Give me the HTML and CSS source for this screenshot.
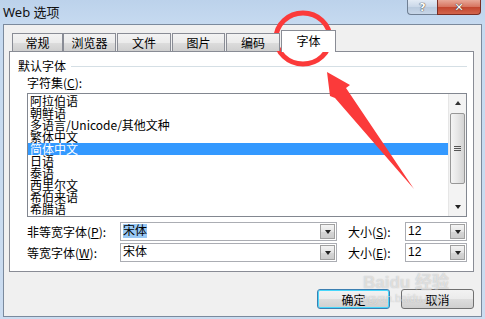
FILE: index.html
```html
<!DOCTYPE html>
<html>
<head>
  <meta charset="UTF-8">
  <title>Web 选项</title>
  <link rel="stylesheet" href="styles.css">
</head>
<body>
  <div class="titlebar">
    <span class="title">Web 选项</span>
    <div class="caption">
      <span class="cap-btn help">?</span>
      <span class="cap-btn close">✕</span>
    </div>
  </div>

  <div class="client">
    <!-- вкладки -->
    <div class="tabs">
      <div class="tab t1">常规</div>
      <div class="tab t2">浏览器</div>
      <div class="tab t3">文件</div>
      <div class="tab t4">图片</div>
      <div class="tab t5">编码</div>
      <div class="tab active">字体</div>
    </div>

    <div class="panel">
      <div class="group"><span>默认字体</span><i class="rule"></i></div>
      <div class="field-label">字符集(<u>C</u>):</div>

      <div class="listbox">
        <ul class="items">
          <li>阿拉伯语</li>
          <li>朝鲜语</li>
          <li>多语言/Unicode/其他文种</li>
          <li>繁体中文</li>
          <li class="selected">简体中文</li>
          <li>日语</li>
          <li>泰语</li>
          <li>西里尔文</li>
          <li>希伯来语</li>
          <li>希腊语</li>
        </ul>
        <div class="vscroll">
          <span class="sb-btn"><i class="tri up"></i></span>
          <span class="track"><span class="thumb"><i class="grip"></i></span></span>
          <span class="sb-btn"><i class="tri down"></i></span>
        </div>
      </div>

      <div class="font-row">
        <span class="row-label">非等宽字体(<u>P</u>):</span>
        <div class="combo wide"><span class="value"><span class="sel">宋体</span></span><span class="drop"><i class="tri down"></i></span></div>
        <span class="size-label">大小(<u>S</u>):</span>
        <div class="combo narrow"><span class="value">12</span><span class="drop"><i class="tri down"></i></span></div>
      </div>
      <div class="font-row second">
        <span class="row-label">等宽字体(<u>W</u>):</span>
        <div class="combo wide"><span class="value">宋体</span><span class="drop"><i class="tri down"></i></span></div>
        <span class="size-label">大小(<u>E</u>):</span>
        <div class="combo narrow"><span class="value">12</span><span class="drop"><i class="tri down"></i></span></div>
      </div>
    </div>

    <div class="actions">
      <button class="btn default">确定</button>
      <button class="btn">取消</button>
    </div>
  </div>

  <!-- пометки поверх скриншота -->
  <svg class="annot" width="485" height="319" viewBox="0 0 485 319">
    <ellipse cx="303" cy="38.5" rx="27" ry="25.5" fill="none" stroke="#fb3a3a" stroke-width="5"/>
    <polygon points="327,72 350,85 346,88 414,189 335,98 330,96" fill="#fb3a3a"/>
  </svg>

  <div class="watermark">
    <div class="wm-logo">Bai<span class="paw">du</span> 经验</div>
    <div class="wm-url">jingyan.baidu.com</div>
  </div>
</body>
</html>
```

FILE: styles.css
```css
body {
  margin: 0;
  width: 485px;
  height: 319px;
  overflow: hidden;
  position: relative;
  font-family: "SimSun", "Noto Sans CJK SC", sans-serif;
  font-size: 12px;
  color: #000;
  background: linear-gradient(to bottom, #bcd2eb 0, #c6daf0 24px, #cbdcf0 100%);
}

/* заголовок окна */
.titlebar { height: 24px; display: flex; align-items: flex-start; }
.title {
  padding: 4px 0 0 3px;
  font-family: "Segoe UI", "Noto Sans", "Noto Sans CJK SC", sans-serif;
  font-size: 13px;
  line-height: 16px;
  color: #111;
}
.caption { margin-left: auto; margin-right: 4px; display: flex; }
.cap-btn {
  height: 15px;
  box-sizing: border-box;
  border: 1px solid #6f7f93;
  border-top: none;
  display: flex; align-items: center; justify-content: center;
  font-family: "DejaVu Sans", sans-serif;
  font-weight: bold;
  color: #fff;
  text-shadow: 0 0 1px #333, 0 0 1px #333;
}
.help {
  width: 30px;
  border-radius: 0 0 0 4px;
  border-right: none;
  font-size: 11px;
  background: linear-gradient(to bottom, #e3ebf5, #c9d7e8 50%, #b9cade 51%, #c7d6e8);
}
.close {
  width: 44px;
  border-radius: 0 0 4px 0;
  border-color: #7a2e24;
  font-size: 11px;
  background: linear-gradient(to bottom, #e8a898, #d6735e 50%, #c2452e 51%, #d2654c);
}

/* клиентская область */
.client {
  margin: 0 3px 0 3px;
  height: 293px;
  box-sizing: border-box;
  border: 1px solid #7b8a9d;
  background: #f0f0f0;
  padding-top: 8px;
}

.tabs { display: flex; height: 18px; align-items: flex-end; margin-left: 8px; position: relative; z-index: 1; }
.tab {
  height: 18px;
  box-sizing: border-box;
  border: 1px solid #898c95;
  border-bottom: none;
  margin-right: 1px;
  text-align: center;
  line-height: 17px;
  background: linear-gradient(to bottom, #f3f3f3, #ebebeb 50%, #dddddd 51%, #cfcfcf);
}
.t1 { width: 51px; margin-right: 0; }
.t2 { width: 53px; }
.t3 { width: 54px; }
.t4 { width: 53px; }
.t5 { width: 54px; }
.tab.active {
  width: 55px;
  height: 22px;
  margin-bottom: -1px;
  margin-left: 0;
  line-height: 20px;
  background: #fff;
}

.panel {
  margin-left: 5px;
  width: 465px;
  height: 221px;
  box-sizing: border-box;
  border: 1px solid #898c95;
  background: #fff;
  padding: 7px 6px 0 8px;
}

.group { display: flex; align-items: center; line-height: 14px; }
.rule { flex: 1; height: 1px; background: #d5dfe5; margin-left: 5px; }
.field-label { margin: 3px 0 0 9px; line-height: 14px; }

.listbox {
  margin: 3px 0 0 9px;
  height: 124px;
  box-sizing: border-box;
  border: 1px solid #828790;
  display: flex;
  overflow: hidden;
}
.items { list-style: none; margin: 0; padding: 1px 0 0 0; flex: 1; }
.items li { height: 12px; line-height: 12px; padding-left: 2px; white-space: nowrap; }
.items li.selected { background: #3399ff; color: #fff; }

.vscroll { width: 17px; display: flex; flex-direction: column; background: #f3f3f3; border-left: 1px solid #e6e6e6; }
.sb-btn { height: 18px; display: flex; align-items: center; justify-content: center; }
.track { flex: 1; display: flex; flex-direction: column; }
.thumb {
  margin: 1px 1px 0 1px;
  height: 69px;
  border: 1px solid #979797;
  border-radius: 2px;
  background: linear-gradient(to right, #f4f4f4, #e6e6e6 50%, #d4d4d4);
  display: flex; align-items: center; justify-content: center;
}
.grip {
  width: 7px; height: 5px;
  background: linear-gradient(to bottom, #555 1px, transparent 1px, transparent 2px, #555 2px, #555 3px, transparent 3px, transparent 4px, #555 4px);
}
.tri { width: 0; height: 0; border-left: 3.5px solid transparent; border-right: 3.5px solid transparent; }
.tri.up { border-bottom: 4px solid #333; }
.tri.down { border-top: 4px solid #222; }

.font-row { display: flex; align-items: center; height: 19px; margin: 5px 0 0 9px; }
.font-row.second { margin-top: 2px; }
.row-label { width: 93px; }
.size-label { margin-left: 11px; width: 57px; }
.combo {
  height: 19px;
  box-sizing: border-box;
  border: 1px solid #abadb3;
  background: #fff;
  display: flex;
  align-items: center;
}
.combo.wide { width: 217px; }
.combo.narrow { width: 62px; }
.combo .value { flex: 1; padding-left: 2px; line-height: 13px; font-family: "Liberation Sans", "Noto Sans CJK SC", sans-serif; }
.combo .value .sel { background: #99c9f5; }
.drop {
  width: 15px; height: 15px;
  margin-right: 1px;
  box-sizing: border-box;
  border: 1px solid #a0a0a0;
  background: linear-gradient(to bottom, #f4f4f4, #e4e4e4 50%, #d6d6d6 51%, #cccccc);
  display: flex; align-items: center; justify-content: center;
}

/* кнопки */
.actions { display: flex; justify-content: flex-end; gap: 11px; margin-top: 17px; padding-right: 7px; }
.btn {
  width: 73px;
  height: 20px;
  box-sizing: border-box;
  border: 1px solid #707070;
  border-radius: 3px;
  font-family: "SimSun", "Noto Sans CJK SC", sans-serif;
  font-size: 12px;
  padding: 0;
  background: linear-gradient(to bottom, #f2f2f2, #ebebeb 50%, #dddddd 51%, #cfcfcf);
}
.btn.default {
  border-color: #3c7fb1;
  box-shadow: inset 0 0 0 1px #48d7fb;
  background: linear-gradient(to bottom, #f2f2f2, #ebebeb 50%, #dddddd 51%, #cfcfcf);
}

.annot { position: absolute; left: 0; top: 0; pointer-events: none; }

.watermark {
  position: absolute;
  left: 363px;
  top: 274px;
  color: rgba(255, 255, 255, 0.55);
  text-shadow: 0 0 1px rgba(120, 120, 120, 0.5);
  font-family: "Liberation Sans", "Noto Sans CJK SC", sans-serif;
  pointer-events: none;
}
.wm-logo { font-size: 17px; font-weight: bold; line-height: 18px; }
.wm-url { font-size: 11px; line-height: 12px; margin-left: -6px; }
```
